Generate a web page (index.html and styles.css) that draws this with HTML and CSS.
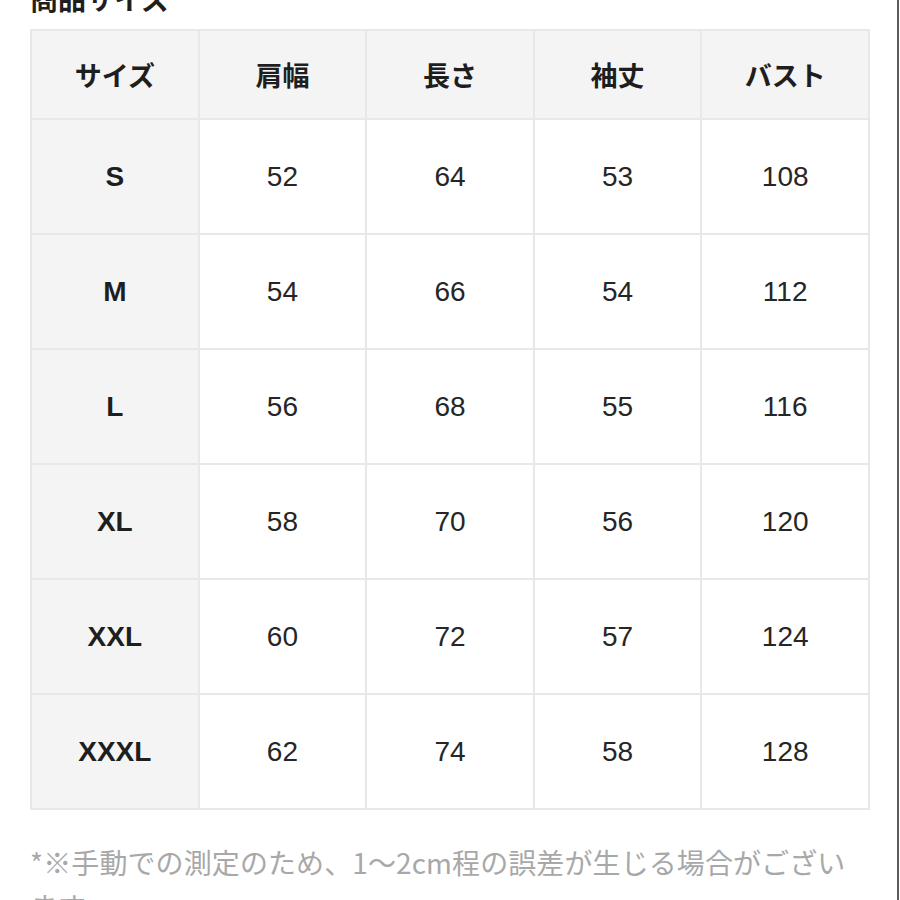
FILE: index.html
```html
<!DOCTYPE html>
<html lang="ja">
<head>
<meta charset="utf-8">
<link rel="stylesheet" href="styles.css">
</head>
<body>
<div class="page">
  <h2 class="title">商品サイズ</h2>
  <table class="size-table">
    <thead>
      <tr>
        <th>サイズ</th><th>肩幅</th><th>長さ</th><th>袖丈</th><th>バスト</th>
      </tr>
    </thead>
    <tbody>
      <tr><th>S</th><td>52</td><td>64</td><td>53</td><td>108</td></tr>
      <tr><th>M</th><td>54</td><td>66</td><td>54</td><td>112</td></tr>
      <tr><th>L</th><td>56</td><td>68</td><td>55</td><td>116</td></tr>
      <tr><th>XL</th><td>58</td><td>70</td><td>56</td><td>120</td></tr>
      <tr><th>XXL</th><td>60</td><td>72</td><td>57</td><td>124</td></tr>
      <tr><th>XXXL</th><td>62</td><td>74</td><td>58</td><td>128</td></tr>
    </tbody>
  </table>
  <p class="note">*※手動での測定のため、1～2cm程の誤差が生じる場合がございます。</p>
</div>
</body>
</html>
```

FILE: styles.css
```css
html, body {
  margin: 0;
  padding: 0;
  background: #ffffff;
}

.page {
  width: 899px;
  height: 900px;
  box-sizing: border-box;
  border-right: 2px solid #5c5c5c;
  padding: 0 29px 0 30px;
  overflow: hidden;
  font-family: "Liberation Sans", "Noto Sans CJK JP", sans-serif;
  color: #1e1e1e;
}

.title {
  margin: -22px 0 0 0;
  font-size: 28px;
  line-height: 40px;
  font-weight: 700;
  font-family: "Noto Sans CJK JP", sans-serif;
}

.size-table {
  margin-top: 11px;
  width: 840px;
  border-collapse: collapse;
  table-layout: fixed;
  border: 2px solid #e6e6e6;
}

.size-table th,
.size-table td {
  border: 2px solid #e8e8e8;
  text-align: center;
  padding: 0;
}

.size-table thead th {
  height: 87px;
  line-height: 28px;
  background: #f4f4f4;
  font-family: "Noto Sans CJK JP", sans-serif;
  font-weight: 700;
  font-size: 27px;
}

.size-table tbody th,
.size-table tbody td {
  height: 113px;
  font-size: 28px;
}

.size-table tbody th {
  background: #f4f4f4;
  font-weight: 700;
}

.size-table tbody td {
  font-weight: 400;
  color: #262626;
}

.note {
  margin: 30px 0 0 0;
  font-size: 28px;
  line-height: 44px;
  color: #a8a8a8;
  font-family: "Noto Sans CJK JP", sans-serif;
  letter-spacing: 0.1px;
}
```
